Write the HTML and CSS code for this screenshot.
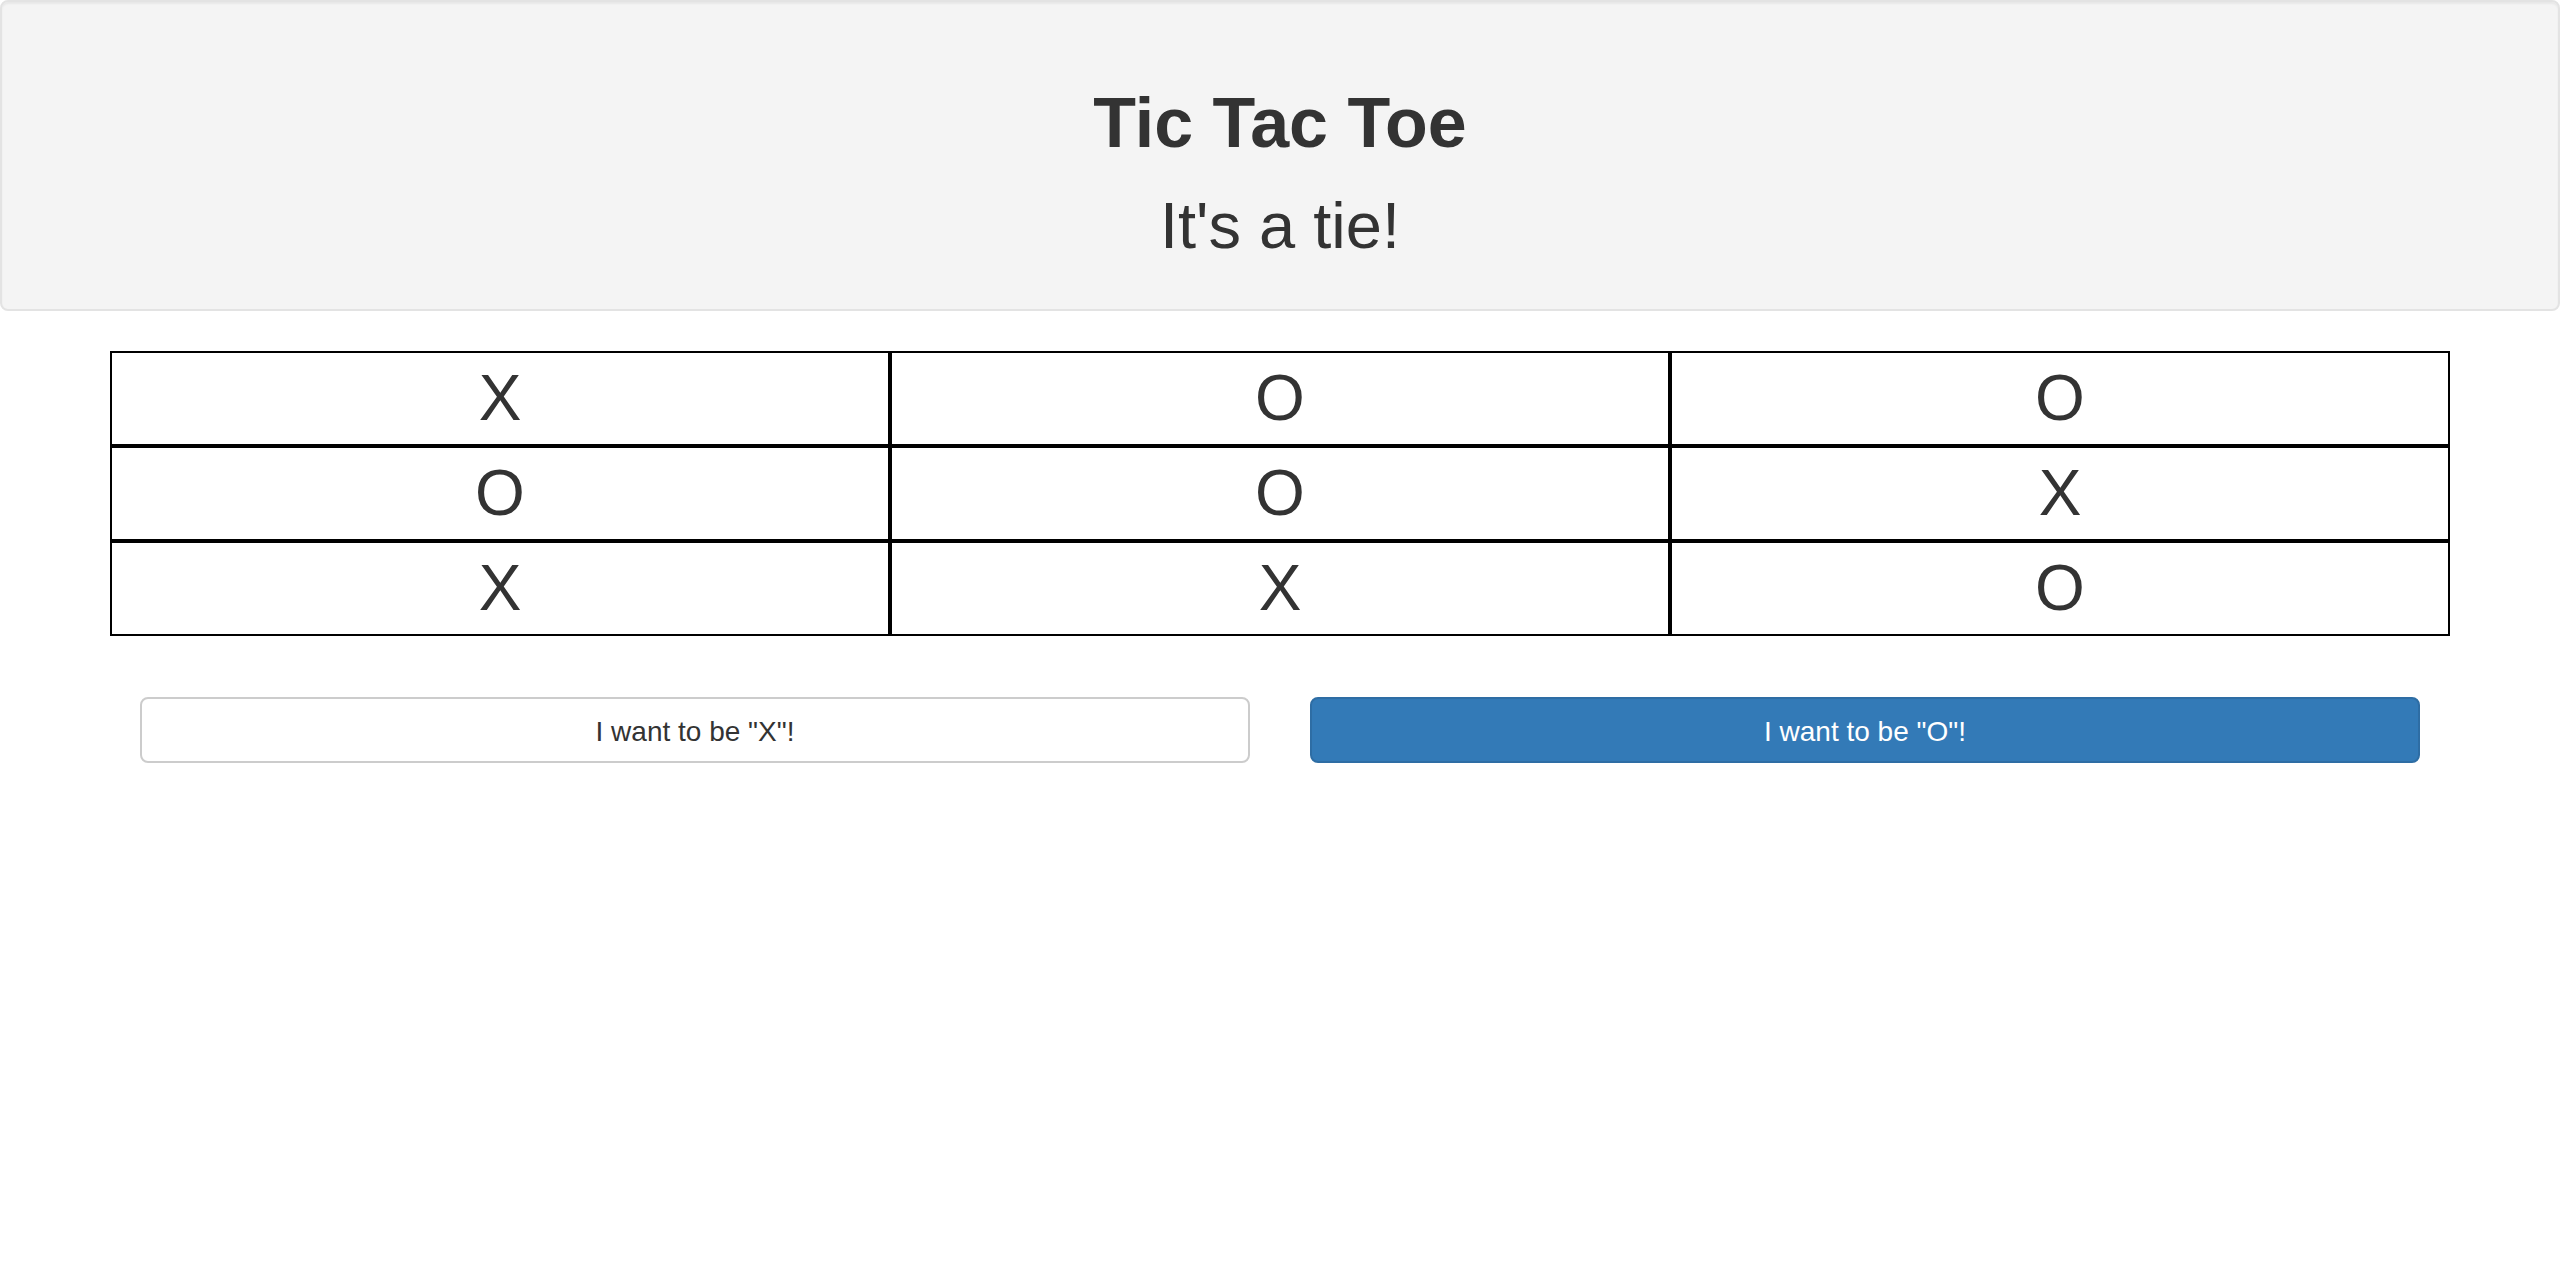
FILE: index.html
```html
<!DOCTYPE html>
<html lang="en">
<head>
<meta charset="utf-8">
<title>Tic Tac Toe</title>
<link rel="stylesheet" href="styles.css">
</head>
<body>
<header class="well">
  <h1 class="title">Tic Tac Toe</h1>
  <h2 class="status">It's a tie!</h2>
</header>
<main class="container">
  <table class="board">
    <tr><td>X</td><td>O</td><td>O</td></tr>
    <tr><td>O</td><td>O</td><td>X</td></tr>
    <tr><td>X</td><td>X</td><td>O</td></tr>
  </table>
  <div class="choices">
    <div class="col"><button class="btn btn-default">I want to be "X"!</button></div>
    <div class="col"><button class="btn btn-primary">I want to be "O"!</button></div>
  </div>
</main>
</body>
</html>
```

FILE: styles.css
```css
html, body {
  margin: 0;
  padding: 0;
  background: #fff;
}
body {
  font-family: "Liberation Sans", Arial, Helvetica, sans-serif;
  color: #333;
}
.well {
  box-sizing: border-box;
  height: 311px;
  background: #f4f4f4;
  border: 2px solid #e3e3e3;
  border-radius: 8px;
  box-shadow: inset 0 2px 2px rgba(0,0,0,0.05);
  padding-top: 81px;
  display: flex;
  flex-direction: column;
  align-items: center;
  gap: 27px;
}
.title {
  margin: 0;
  font-size: 70px;
  line-height: 80px;
  font-weight: bold;
  color: #333;
}
.status {
  margin: 0;
  font-size: 65px;
  line-height: 72px;
  font-weight: normal;
  color: #333;
}
.container {
  padding: 0 110px;
  margin-top: 40px;
}
.board {
  width: 100%;
  table-layout: fixed;
  border-collapse: separate;
  border-spacing: 0;
}
.board td {
  border: 2px solid #000;
  height: 91px;
  padding: 0;
  text-align: center;
  vertical-align: middle;
  font-size: 64px;
  line-height: 91px;
  color: #333;
}
.choices {
  display: grid;
  grid-template-columns: 1fr 1fr;
  margin-top: 61px;
}
.col {
  padding: 0 30px;
}
.btn {
  display: block;
  box-sizing: border-box;
  width: 100%;
  height: 66px;
  border: 2px solid #ccc;
  border-radius: 8px;
  font-family: "Liberation Sans", Arial, Helvetica, sans-serif;
  font-size: 28px;
  line-height: 40px;
  padding: 3px 0 0;
  cursor: pointer;
}
.btn-default {
  background: #fff;
  color: #333;
  border-color: #ccc;
}
.btn-primary {
  background: #337ab7;
  color: #fff;
  border-color: #2e6da4;
}
```
